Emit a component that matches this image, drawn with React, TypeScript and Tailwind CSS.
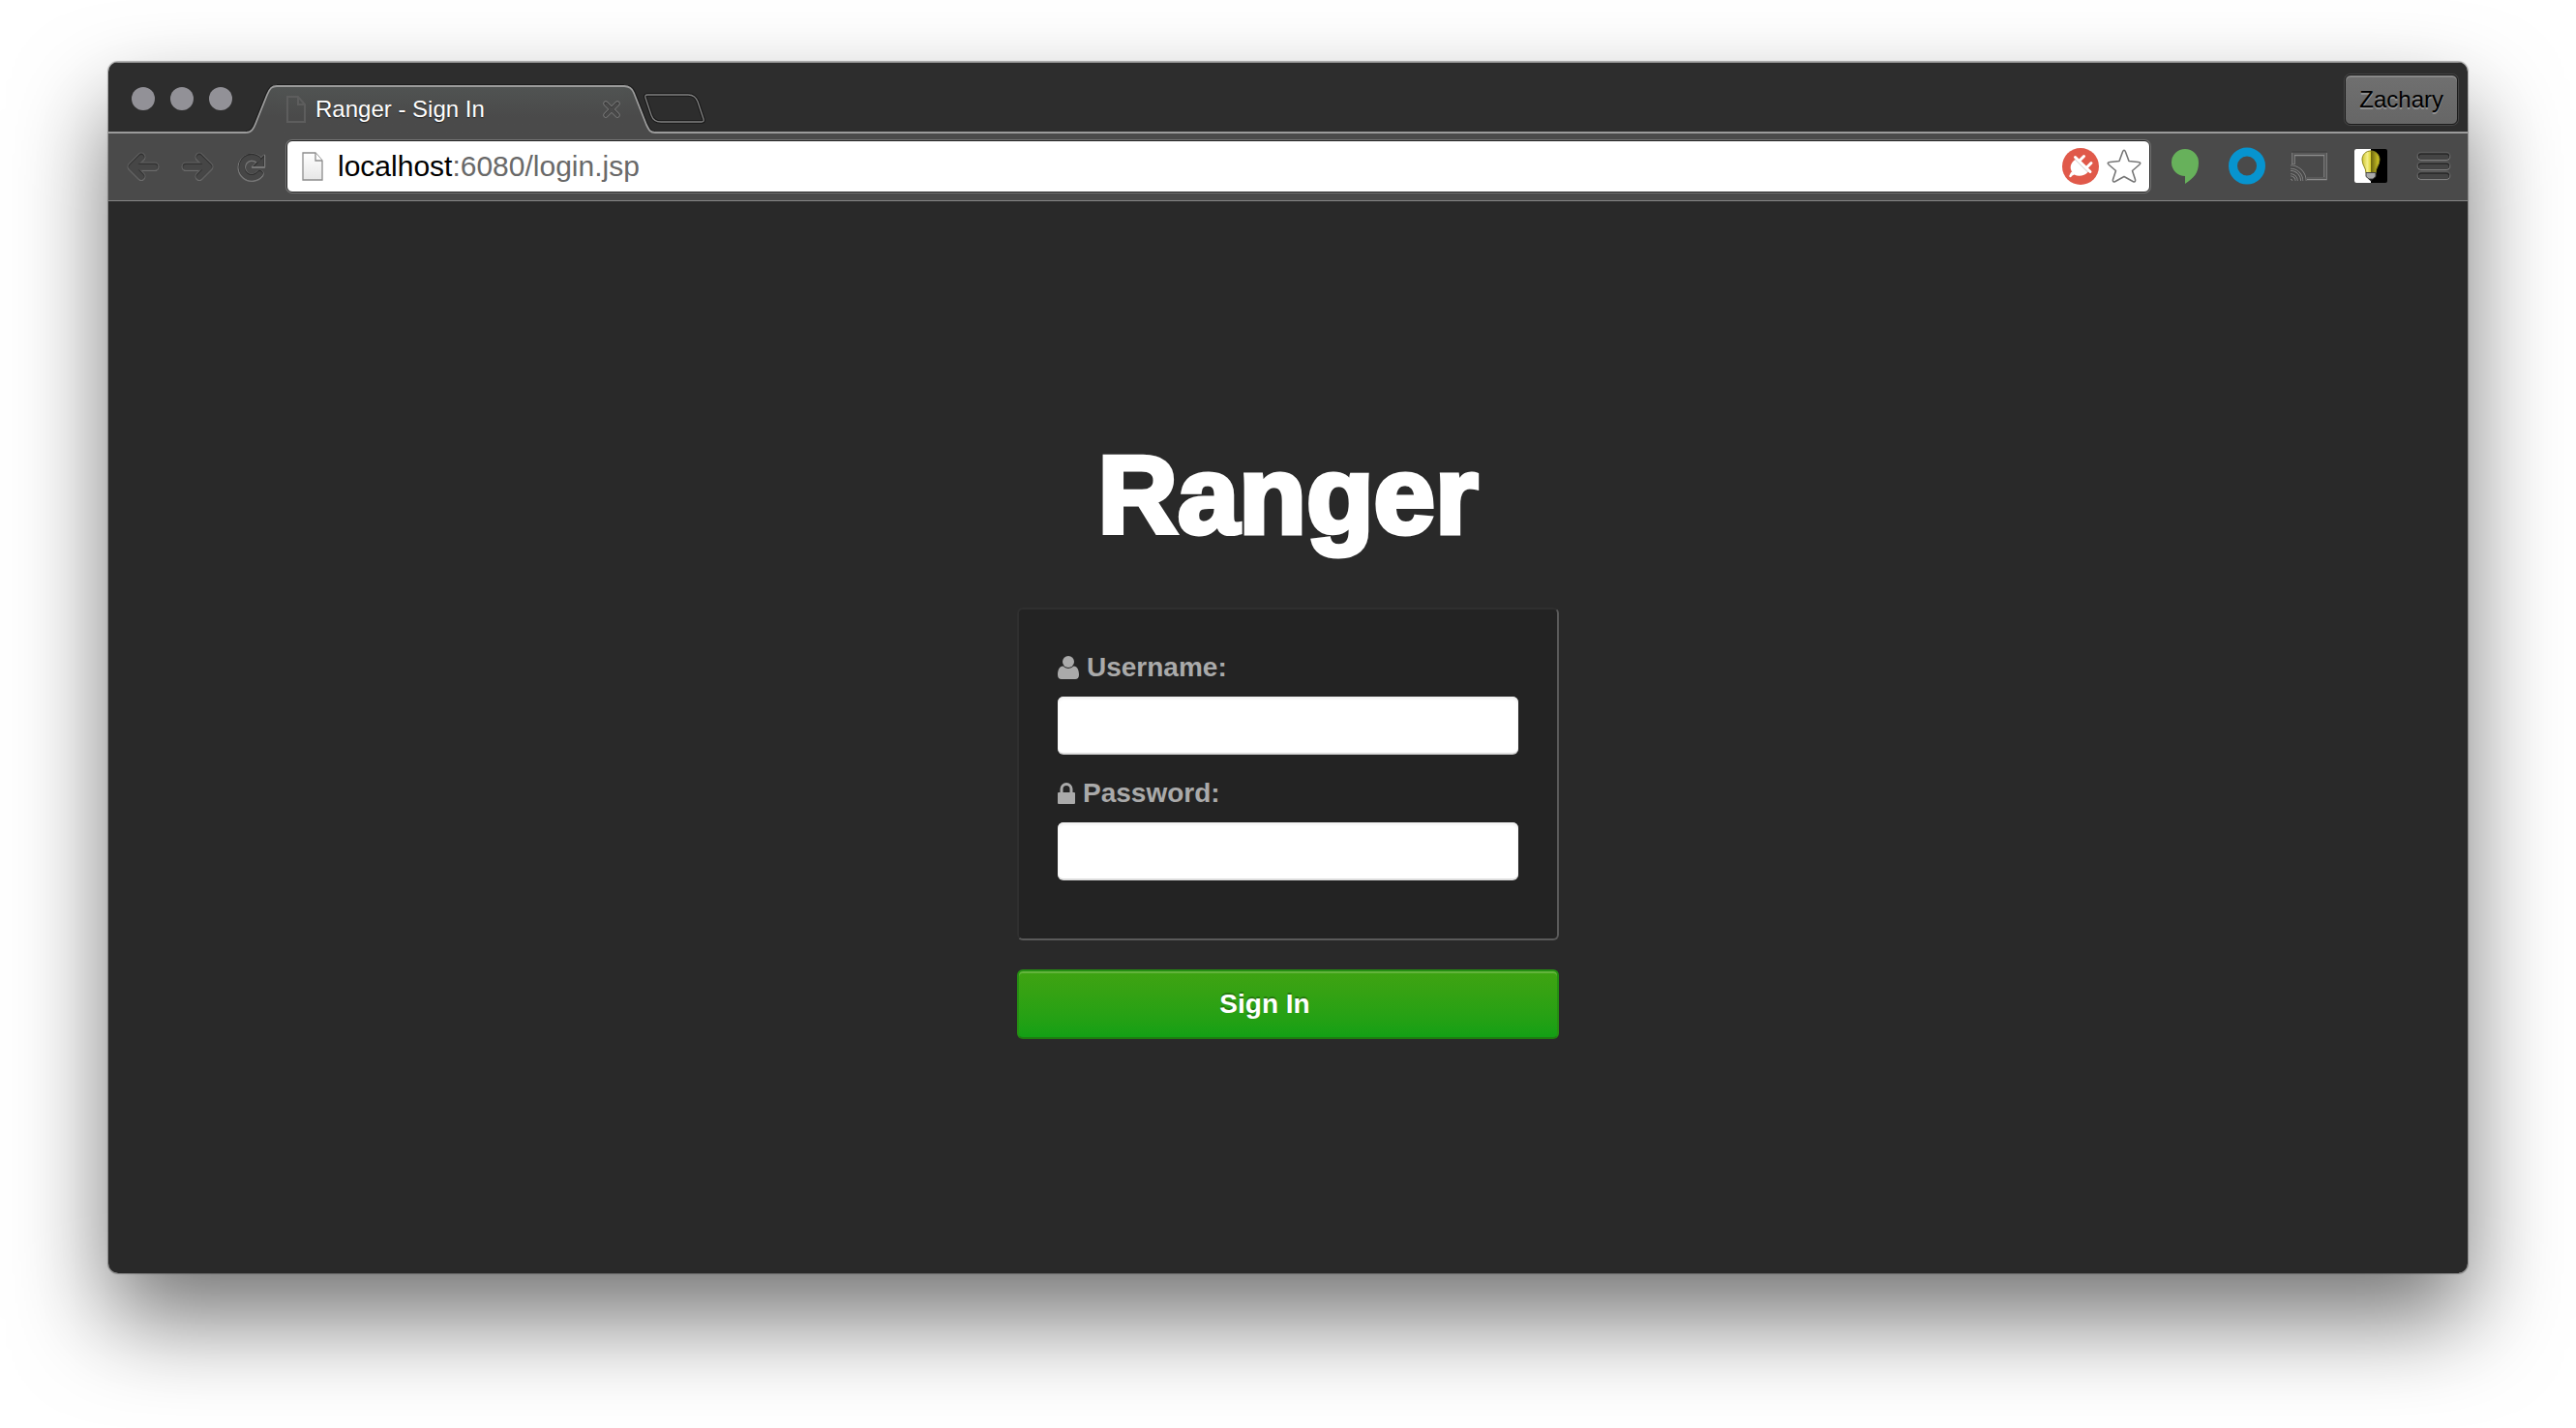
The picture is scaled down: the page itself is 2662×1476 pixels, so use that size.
import React from 'react';

const iconButton = 'flex size-10 shrink-0 items-center justify-center';

function Etched({ d }: { d: string }) {
  return (
    <svg viewBox="0 0 40 40" className="size-10" fill="none" strokeLinecap="round" strokeLinejoin="round">
      <path d={d} stroke="#7c7c7c" strokeWidth="8.500" transform="translate(0 .8)" />
      <path d={d} stroke="#5c5c5c" strokeWidth="9" />
      <path d={d} stroke="#303030" strokeWidth="6.500" />
      <path d={d} stroke="#464646" strokeWidth="5.500" transform="translate(0 .8)" />
    </svg>
  );
}

function ReloadIcon() {
  const arc = 'M28.500 27A10.500 10.500 0 1 1 26.500 12';
  const head = 'M33 8V20H21Z';
  return (
    <svg viewBox="0 0 40 40" className="size-10" fill="none" strokeLinecap="round">
      <g stroke="#777777" transform="translate(0 .8)">
        <path d={arc} strokeWidth="8.500" />
        <path d={head} strokeWidth="2.500" fill="#777777" strokeLinejoin="round" />
      </g>
      <path d={arc} stroke="#303030" strokeWidth="6.500" />
      <path d={head} fill="#303030" />
      <path d={arc} stroke="#464646" strokeWidth="5.500" transform="translate(0 .8)" />
      <path d="M32.500 10.500V20H23Z" fill="#464646" />
    </svg>
  );
}

function TabEdge({ side }: { side: 'left' | 'right' }) {
  const line =
    side === 'left'
      ? 'M0 49C6 49 8 45 10 40L22 10C25 3 27 1 32 1'
      : 'M0 1C5 1 8 3 10 8L23 41C26 47 27 49 32 49';
  return (
    <svg viewBox="0 0 32 50" className="h-[50px] w-8 shrink-0" fill="none">
      <defs>
        <linearGradient id={`tab-${side}`} x1="0" y1="0" x2="0" y2="50" gradientUnits="userSpaceOnUse">
          <stop offset="0" stopColor="#505352" />
          <stop offset="0.65" stopColor="#4a4a4a" />
        </linearGradient>
      </defs>
      <path d={line} stroke="#1c1c1c" strokeWidth="4" />
      <path d={`${line}V50H0Z`} fill={`url(#tab-${side})`} />
      <path d={line} stroke="#9b9b9b" strokeWidth="1.800" />
    </svg>
  );
}

function Tab() {
  return (
    <div className="relative -mb-0.5 ml-1 flex h-[50px] self-end">
      <TabEdge side="left" />
      <div className="flex w-[359px] items-center border-t-2 border-[#9b9b9b] bg-linear-to-b from-[#505352] to-[#4a4a4a] to-65% pr-1 pb-0.5 pl-2.5 shadow-[0_-1px_0_#1c1c1c]">
        <svg viewBox="0 0 20 28" className="h-7 w-5" fill="none" stroke="#5d5d5d" strokeWidth="2">
          <path d="M1 1h11l7 8v18H1zM12 1v8h7" />
        </svg>
        <span className="ml-2.5 flex-1 text-2xl leading-7 text-white [text-shadow:0_1px_1px_#222]">Ranger - Sign In</span>
        <button aria-label="Close tab" className="size-[18px]">
          <svg viewBox="0 0 18 18" className="size-[18px]" fill="none" strokeLinecap="round">
            <path d="M3 3l12 12M15 3L3 15" stroke="#747474" strokeWidth="5.500" />
            <path d="M3 3l12 12M15 3L3 15" stroke="#383838" strokeWidth="3.500" />
            <path d="M3.500 4l11 11M14.500 4l-11 11" stroke="#4a4a4a" strokeWidth="2.500" />
          </svg>
        </button>
      </div>
      <TabEdge side="right" />
    </div>
  );
}

function Titlebar() {
  return (
    <header className="flex h-[72px] border-t border-[#909090] bg-[#2d2d2d] pr-2.5 pl-6">
      <div className="flex items-center gap-4 pt-0.5">
        <button aria-label="Close" className="size-6 rounded-full bg-[#929197]" />
        <button aria-label="Minimize" className="size-6 rounded-full bg-[#929197]" />
        <button aria-label="Zoom" className="size-6 rounded-full bg-[#929197]" />
      </div>
      <div className="flex flex-1 pl-2.5">
        <Tab />
        <button aria-label="New tab" className="relative mb-2 -ml-3 h-8 w-16 self-end">
          <svg viewBox="0 0 64 32" className="h-8 w-16" fill="none">
            <path d="M4 2H46C52 2 54 5 56 9L62 27Q63 30 60 30H18C12 30 9 26 8 23L2 5Q1 2 4 2Z" stroke="#191919" strokeWidth="3.500" />
            <path d="M4 2H46C52 2 54 5 56 9L62 27Q63 30 60 30H18C12 30 9 26 8 23L2 5Q1 2 4 2Z" stroke="#808080" strokeWidth="1.300" />
          </svg>
        </button>
      </div>
      <button className="mt-3 h-[52px] rounded-md border border-[#1b1b1b] bg-linear-to-b from-[#707070] to-[#666666] px-3.5 text-2xl leading-8 text-black shadow-[0_0_0_1px_#454545,inset_0_2px_0_#888888] [text-shadow:0_2px_0_#929292]">
        Zachary
      </button>
    </header>
  );
}

function Omnibox() {
  return (
    <div className="mx-4 flex h-[54px] flex-1 items-center rounded-md border border-[#222222] bg-white pr-2 pl-[15px] shadow-[0_0_0_1px_#757575]">
      <svg viewBox="0 0 22 30" className="h-[30px] w-[22px]">
        <defs>
          <linearGradient id="page" x1="0" y1="0" x2="0" y2="1">
            <stop offset="0" stopColor="#fff" />
            <stop offset="1" stopColor="#e6e6e6" />
          </linearGradient>
        </defs>
        <path d="M1 1h13l7 8v20H1z" fill="url(#page)" stroke="#8c8c8c" strokeWidth="1.300" />
        <path d="M14 1v8h7" fill="#fff" stroke="#8c8c8c" strokeWidth="1.300" />
      </svg>
      <p className="ml-[15px] flex-1 text-[30px] leading-9 text-[#696969]">
        <span className="text-black">localhost</span>:6080/login.jsp
      </p>
      <button aria-label="Plugin" className="size-[38px]">
        <svg viewBox="0 0 38 38" className="size-[38px]">
          <circle cx="19" cy="19" r="19" fill="#e0594a" />
          <path d="M14 11.500C9.500 14.500 7.500 19 9.500 23.500L10.500 25.500 8.500 29.500 12.500 27.500C17 30 23 29 27 24.500Z" fill="#fff" />
          <path d="M13.500 9.500L29 24.500" stroke="#fff" strokeWidth="3" strokeLinecap="round" />
          <path d="M17.500 13.500L22.500 8.500M25 20.500L30 15.500" stroke="#fff" strokeWidth="3" strokeLinecap="round" />
          <path d="M13 11.500L26.500 25" stroke="#cfcfcf" strokeWidth="1" />
          <path d="M10 26L8.500 29" stroke="#fff" strokeWidth="2.500" strokeLinecap="round" />
        </svg>
      </button>
      <button aria-label="Bookmark" className="ml-2 size-9">
        <svg viewBox="0 0 36 36" className="size-9" fill="#fff" stroke="#777777" strokeWidth="1.600" strokeLinejoin="round">
          <path d="M16.500 3Q18 -.5 19.500 3L23 12.500 32.500 13.500Q36.500 14 33.500 16.500L26.500 22.500 29.500 31.500Q30.200 35 27 33.500L18 28.500 9 33.500Q5.800 35 6.500 31.500L9.500 22.500 2.500 16.500Q-.5 14 3.500 13.500L13 12.500Z" />
        </svg>
      </button>
    </div>
  );
}

function Toolbar() {
  return (
    <nav className="flex h-[72px] items-center border-t-2 border-b border-t-[#9b9b9b] border-b-[#858585] bg-[#4a4a4a] px-4 pb-0.5">
      <div className="flex gap-4">
        <button aria-label="Back" className={iconButton}>
          <Etched d="M18 10L8 20L18 30M9 20H32" />
        </button>
        <button aria-label="Forward" className={iconButton}>
          <Etched d="M22 10L32 20L22 30M31 20H8" />
        </button>
        <button aria-label="Reload" className={iconButton}>
          <ReloadIcon />
        </button>
      </div>
      <Omnibox />
      <div className="flex gap-6">
        <button aria-label="Hangouts" className={iconButton}>
          <svg viewBox="0 0 40 40" className="size-10">
            <path d="M20 2a14 14 0 0 1 14 14c0 11-5 16-14 22v-8a14 14 0 0 1 0-28z" fill="#67b15b" />
          </svg>
        </button>
        <button aria-label="Okta" className={iconButton}>
          <svg viewBox="0 0 40 40" className="size-10">
            <circle cx="20" cy="19.500" r="14.500" fill="none" stroke="#0794cf" strokeWidth="9" />
          </svg>
        </button>
        <button aria-label="Cast" className={iconButton}>
          <svg viewBox="0 0 40 40" className="size-10" fill="none">
            <path d="M4 18V7H37V32.500H18" stroke="#303030" strokeWidth="3" transform="translate(0 -.8)" />
            <path d="M4 18V7.500H37V32.500H18" stroke="#8c8c8c" strokeWidth="3.500" />
            <path d="M4 18V7.500H37V32.500H18" stroke="#5a5a5a" strokeWidth="2" transform="translate(0 -.5)" />
            <path d="M1 20.500A14.500 14.500 0 0 1 15.500 35M1 26A9 9 0 0 1 10 35M1 31.500A3.500 3.500 0 0 1 4.500 35" stroke="#8c8c8c" strokeWidth="4" />
            <path d="M1 20.500A14.500 14.500 0 0 1 15.500 35M1 26A9 9 0 0 1 10 35M1 31.500A3.500 3.500 0 0 1 4.500 35" stroke="#484848" strokeWidth="2.500" />
          </svg>
        </button>
        <button aria-label="Lights" className={iconButton}>
          <svg viewBox="0 0 40 40" className="size-10">
            <defs>
              <linearGradient id="bulb" x1="0" x2="1" y1="0" y2="0">
                <stop offset="0" stopColor="#cfc52c" />
                <stop offset="0.3" stopColor="#f3ee8a" />
                <stop offset="0.48" stopColor="#e0d635" />
                <stop offset="0.52" stopColor="#6f6810" />
                <stop offset="1" stopColor="#d9cf28" />
              </linearGradient>
            </defs>
            <rect x="3" y="2" width="34" height="35" rx="2" fill="#000" />
            <path d="M20 2H5a2 2 0 0 0-2 2v31a2 2 0 0 0 2 2h15z" fill="#fff" />
            <path d="M20 4c5.500 0 9 4 9 9 0 6-4 8-4 14h-10c0-6-4-8-4-14 0-5 3.500-9 9-9z" fill="url(#bulb)" stroke="#8d861c" strokeWidth="1" />
            <path d="M15 26.500h10v4l-3 2.500h-4l-3-2.500z" fill="#a9a9a9" stroke="#444" strokeWidth="1" />
            <path d="M17.500 33h5l-2.500 2.500z" fill="#222" />
          </svg>
        </button>
        <button aria-label="Menu" className={iconButton}>
          <svg viewBox="0 0 40 40" className="size-10" fill="none" strokeLinecap="round">
            <path d="M8 9.500H34M8 19.500H34M8 29.500H34" stroke="#5a5a5a" strokeWidth="9.500" />
            <path d="M8 9.500H34M8 19.500H34M8 29.500H34" stroke="#8c8c8c" strokeWidth="7" transform="translate(0 .7)" />
            <path d="M8 9.500H34M8 19.500H34M8 29.500H34" stroke="#262626" strokeWidth="6.500" />
            <path d="M8 9.500H34M8 19.500H34M8 29.500H34" stroke="#444444" strokeWidth="5" transform="translate(0 .7)" />
          </svg>
        </button>
      </div>
    </nav>
  );
}

function UserIcon() {
  return (
    <svg viewBox="0 0 22 24" className="h-6 w-[22px]" fill="currentColor">
      <circle cx="11" cy="6" r="6" />
      <path d="M5.500 10.500a7.500 7.500 0 0 0 11 0C20.500 10.500 22 15 22 19.500 22 22.500 20.500 24 18 24H4c-2.500 0-4-1.500-4-4.500 0-4.500 1.500-9 5.500-9z" />
    </svg>
  );
}

function LockIcon() {
  return (
    <svg viewBox="0 0 18 22" className="h-[22px] w-[18px]" fill="currentColor">
      <path d="M2.500 10V6.500a6.500 6.500 0 0 1 13 0V10H17a1 1 0 0 1 1 1v10a1 1 0 0 1-1 1H1a1 1 0 0 1-1-1V11a1 1 0 0 1 1-1zM5.500 10h7V6.500a3.500 3.500 0 0 0-7 0z" />
    </svg>
  );
}

const labelClass = 'flex items-center gap-2 text-[28px] leading-10 font-bold text-[#aaaaaa]';
const inputClass =
  'mt-2.5 h-[60px] w-full rounded-md border-b-2 border-[#dddddd] bg-white px-3 text-[28px] text-[#555555] shadow-[inset_0_2px_3px_#eeeeee] outline-none';

function Login() {
  return (
    <main className="flex flex-1 flex-col items-center bg-[#292929] pt-61">
      <h1 className="text-[114px] leading-[120px] font-bold text-white [-webkit-text-stroke:5px_white]">Ranger</h1>
      <form className="mt-14 w-[560px]" onSubmit={(e) => e.preventDefault()}>
        <div className="rounded-md border-2 border-t-[#2f2f2f] border-r-[#5a5a5a] border-b-[#5a5a5a] border-l-[#2f2f2f] bg-[#232323] px-10 pt-10 pb-15">
          <label htmlFor="username" className={labelClass}>
            <UserIcon />
            Username:
          </label>
          <input id="username" type="text" className={inputClass} />
          <label htmlFor="password" className={`${labelClass} mt-5`}>
            <LockIcon />
            Password:
          </label>
          <input id="password" type="password" className={inputClass} />
        </div>
        <button
          type="submit"
          className="mt-[30px] h-[72px] w-full rounded-md border-2 border-[#258f12] border-b-[#1f7a10] bg-linear-to-b from-[#3fa312] to-[#12a015] pr-12 text-[28px] leading-10 font-bold text-white shadow-[inset_0_2px_0_#63b43c] [text-shadow:0_-2px_0_rgba(0,0,0,0.25)]"
        >
          Sign In
        </button>
      </form>
    </main>
  );
}

export default function App() {
  return (
    <div className="flex min-h-screen flex-col bg-white px-28 pt-16 pb-40 font-['Liberation_Sans',Arial,sans-serif]">
      <div className="flex flex-1 flex-col rounded-[10px] shadow-[0_0_1px_1px_rgba(0,0,0,0.3),0_48px_96px_rgba(0,0,0,0.54)]">
        <div className="flex flex-1 flex-col overflow-hidden rounded-[10px]">
          <Titlebar />
          <Toolbar />
          <Login />
        </div>
      </div>
    </div>
  );
}
